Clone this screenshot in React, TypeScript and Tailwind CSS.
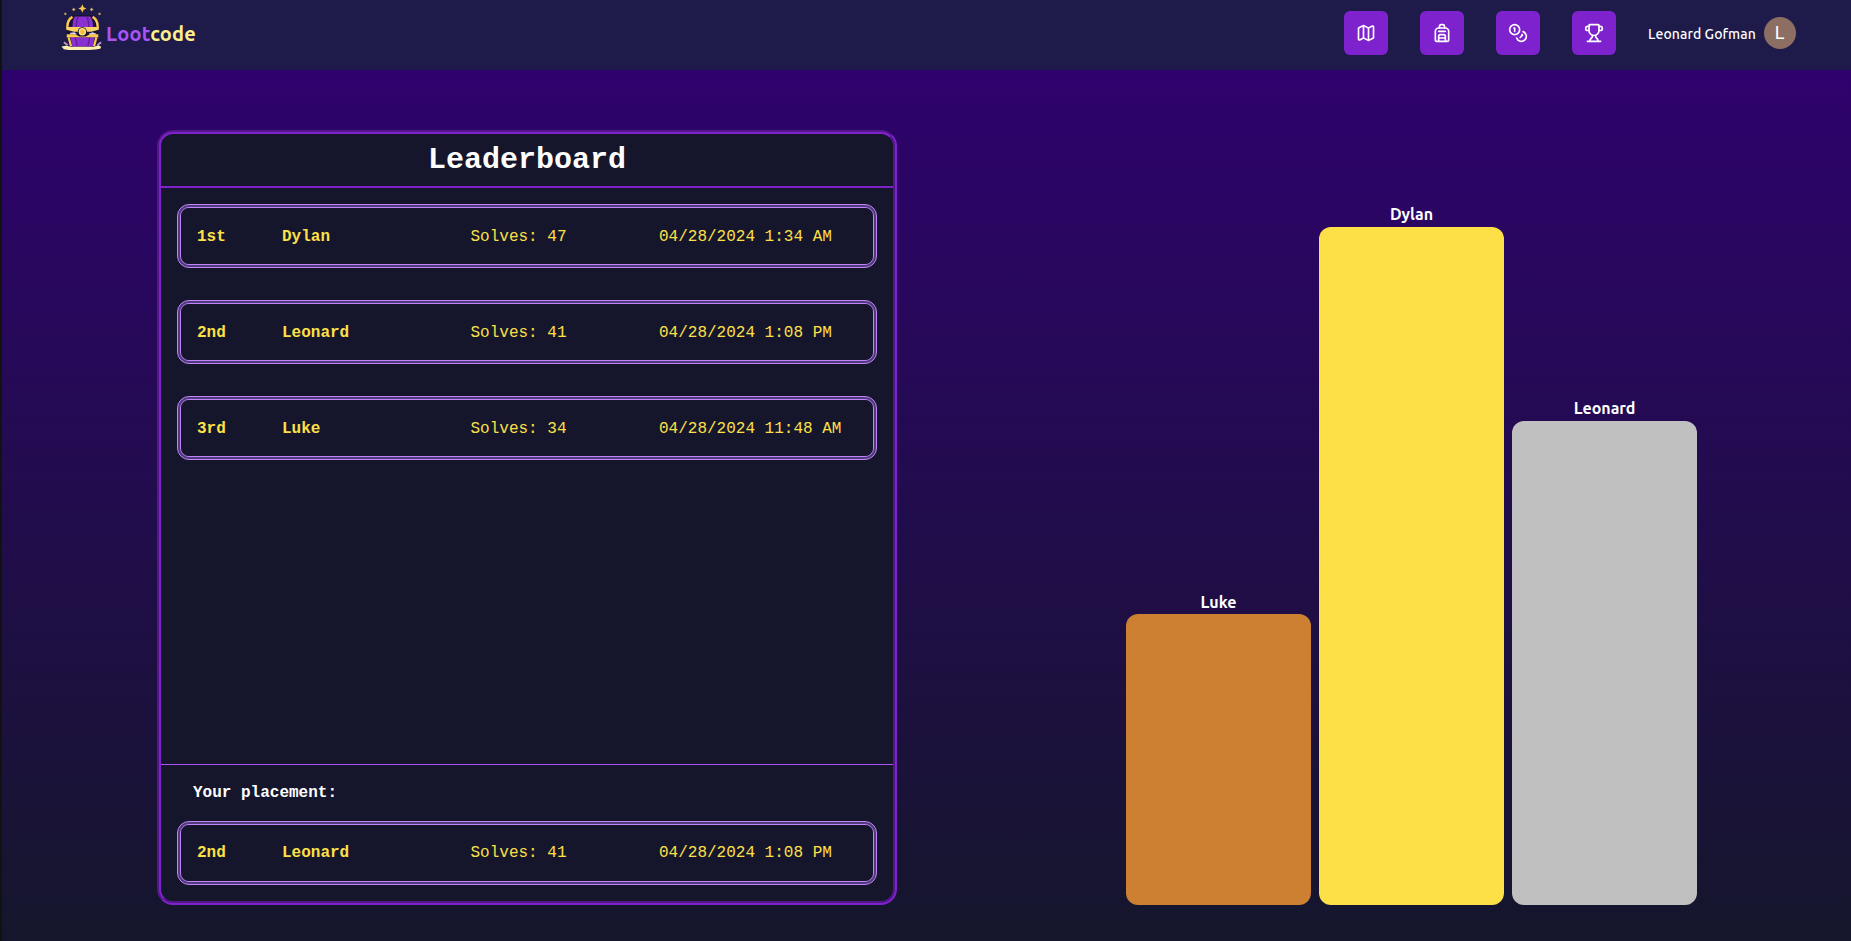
import { Backpack, Coins, Map, Trophy } from "lucide-react";

const mono = "font-['Liberation_Mono',monospace]";

function Logo() {
  return (
    <svg className="mb-[13px]" width="44" height="46" viewBox="0 0 46 48" fill="none">
      <path d="M22.3 0.2l1.300 3.100 2.900 1.300-2.900 1.300-1.300 3.100-1.300-3.100-2.900-1.300 2.900-1.300z" fill="#fbc94b" />
      <path d="M13.3 4l.5 1.200 1.200.5-1.200.5-.5 1.200-.5-1.200-1.200-.5 1.200-.5zM32 4l.5 1.200 1.200.5-1.200.5-.5 1.200-.5-1.200-1.200-.5 1.200-.5z" fill="#e5c05a" stroke="#e5c05a" strokeWidth=".5" />
      <path d="M4.5 9l.4.9.9.4-.9.4-.4.9-.4-.9-.9-.4.9-.4zM40.3 9l.4.9.9.4-.9.4-.4.9-.4-.9-.9-.4.9-.4z" fill="#f0c84c" stroke="#f0c84c" strokeWidth=".4" />
      <path d="M9 12.5c2-1.300 24-1.300 26.500 0C38 15 38.500 19 38.500 23H6.500c0-4 0-8 2.500-10.500z" fill="#171333" />
      <path d="M14.500 13h16c2.500 3 3 7 3 11H12c0-4 .5-8 2.500-11z" fill="#8a2fd0" />
      <path d="M18 13c-1.500 3-2 7-2 11M27 13c1.500 3 2 7 2 11" stroke="#5a1f9c" strokeWidth="1.300" />
      <path d="M12 13.500C8 15.500 6.500 19 6.500 24.500M33 13.500c4 2 5.500 5.500 5.500 11" stroke="#f5b83f" strokeWidth="2.600" />
      <path d="M11.500 14C8.500 16.500 7 20 7 23M33.500 14c3 2.500 4.500 6 4.500 9" stroke="#ffe487" strokeWidth="1" />
      <path d="M6 25h33v9H6z" fill="#171333" />
      <path d="M5.500 24h34v3l-8 2H13.500l-8-2z" fill="#fbd365" />
      <path d="M10 30l4-.5 3 2H9zM29 31l4-1.500 4 1.500-1 1h-6z" fill="#ded2f2" />
      <path d="M6 31.500h9l4 2.500h7l4-2.500h9V35H6z" fill="#fbc94b" />
      <path d="M10 35h25l-2 9.500H12z" fill="#8a2fd0" />
      <path d="M15 35l2 9M30 35l-2 9" stroke="#5a1d9c" strokeWidth="1.200" />
      <path d="M8 35l2.500 9M37 35l-2.500 9" stroke="#fbc94b" strokeWidth="2.300" />
      <path d="M3 40l4 3M42 40l-4 3" stroke="#c691b9" strokeWidth="2" />
      <path d="M.5 44.500l5-1 5 1.200h24l4.500-1.500 3 1.500-1 2-5 .8-9 .7H9l-6-1z" fill="#ffefb0" />
      <circle cx="22.300" cy="29" r="4.800" fill="#171333" />
      <circle cx="22.300" cy="29" r="3.200" fill="#f4bb45" stroke="#ffdf79" strokeWidth="1.400" />
    </svg>
  );
}

type Entry = { place: string; name: string; solves: number; time: string };

const entries: Entry[] = [
  { place: "1st", name: "Dylan", solves: 47, time: "04/28/2024 1:34 AM" },
  { place: "2nd", name: "Leonard", solves: 41, time: "04/28/2024 1:08 PM" },
  { place: "3rd", name: "Luke", solves: 34, time: "04/28/2024 11:48 AM" },
];

function Row({ entry, className = "" }: { entry: Entry; className?: string }) {
  return (
    <div className="h-16 rounded-xl border-4 border-double border-[#c084fc] bg-[#513a7a]">
      <div
        className={`grid h-full grid-cols-[85px_188.500px_188.500px_1fr] items-center rounded-lg bg-[#15162c] pl-4 text-base leading-6 text-[#fde047] ${className}`}
      >
        <span className="font-bold">{entry.place}</span>
        <span className="font-bold">{entry.name}</span>
        <span>Solves: {entry.solves}</span>
        <span>{entry.time}</span>
      </div>
    </div>
  );
}

const bars = [
  { name: "Luke", label: "h-6", style: "h-[291px] bg-[#cd7f32]" },
  { name: "Dylan", label: "h-[25px]", style: "h-[678px] bg-[#fde047]" },
  { name: "Leonard", label: "h-[25px]", style: "h-[484px] bg-[#c0c0c0]" },
];

export default function App() {
  return (
    <div className="flex h-[941px] w-[1851px] flex-col overflow-hidden border-l-2 border-[#121212] font-['Ubuntu','Noto_Sans',sans-serif]">
      <header className="flex h-[70px] shrink-0 items-center bg-[#1e1b4b] pr-[55px] pb-1 pl-[59px]">
        <div className="flex items-center">
          <Logo />
          <span className="pt-0.5 pl-px text-xl font-bold tracking-[0.2px] text-[#a855f7]">
            Loot<span className="text-[#fef08a]">code</span>
          </span>
        </div>
        <nav className="ml-auto flex gap-8">
          {[Map, Backpack, Coins, Trophy].map((Icon, i) => (
            <button key={i} className="flex size-11 items-center justify-center rounded-md bg-[#7e22ce] text-white">
              <Icon size={20} />
            </button>
          ))}
        </nav>
        <span className="ml-8 w-[108px] pt-px text-sm font-medium tracking-[0.08px] whitespace-nowrap text-white">Leonard Gofman</span>
        <span className="ml-2 flex size-8 items-center justify-center rounded-full bg-[#8d6e63] pr-px font-['Roboto',sans-serif] text-lg leading-none text-white">
          L
        </span>
      </header>
      <main className="flex flex-1 items-end bg-linear-to-b/srgb from-[#2e026d] to-[#15162c] pb-9 pl-[155px]">
        <section
          className={`h-[775px] w-[740px] rounded-2xl border-2 border-t-[#54178a] border-r-[#7e22ce] border-b-[#7e22ce] border-l-[#54178a] bg-[#6a1dac] ${mono}`}
        >
          <div className="flex h-full flex-col rounded-[14px] border-2 border-t-[#7e22ce] border-r-[#54178a] border-b-[#54178a] border-l-[#7e22ce] bg-[#15162c]">
            <h1 className="h-[54px] border-b-2 border-[#7e22ce] pt-2 text-center text-3xl font-bold text-white">Leaderboard</h1>
            <div className="flex flex-1 flex-col gap-8 p-4">
              {entries.map((e) => (
                <Row key={e.place} entry={e} className="pt-0.5" />
              ))}
            </div>
            <div className="h-[137px] border-t border-[#a855f7] px-4">
              <p className="mt-4 mb-4 pl-4 text-base leading-6 font-bold text-white">Your placement:</p>
              <Row entry={entries[1]} />
            </div>
          </div>
        </section>
        <section className="ml-[229px] flex items-end gap-2">
          {bars.map((b) => (
            <div key={b.name} className="flex w-[185px] flex-col items-center">
              <span className={`text-base leading-6 font-bold text-white ${b.label}`}>{b.name}</span>
              <div className={`w-full rounded-xl ${b.style}`} />
            </div>
          ))}
        </section>
      </main>
    </div>
  );
}
